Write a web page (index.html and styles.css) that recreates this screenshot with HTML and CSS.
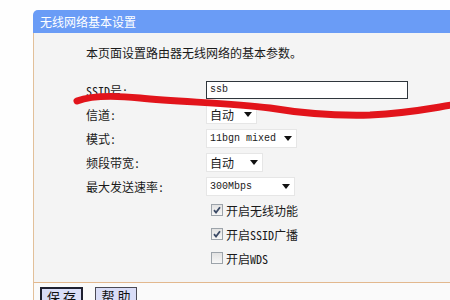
FILE: index.html
```html
<!DOCTYPE html>
<html lang="zh-CN">
<head>
<meta charset="utf-8">
<title>无线网络基本设置</title>
<link rel="stylesheet" href="styles.css">
</head>
<body>
<div class="panel">
  <div class="hd">无线网络基本设置</div>
  <div class="bd">
    <p class="intro">本页面设置路由器无线网络的基本参数。</p>
    <div class="form">
      <div class="row"><span class="lbl">SSID号:</span><span class="input">ssb</span></div>
      <div class="row"><span class="lbl">信道:</span><span class="select w50"><span class="val cjk">自动</span><i class="arr"></i></span></div>
      <div class="row"><span class="lbl">模式:</span><span class="select w90"><span class="val">11bgn mixed</span><i class="arr"></i></span></div>
      <div class="row"><span class="lbl">频段带宽:</span><span class="select w56"><span class="val cjk">自动</span><i class="arr"></i></span></div>
      <div class="row"><span class="lbl">最大发送速率:</span><span class="select w88"><span class="val">300Mbps</span><i class="arr"></i></span></div>
      <div class="row"><span class="lbl"></span><span class="chk on"><svg viewBox="0 0 10 10"><path d="M2 5.2 L4 7.6 L8 2.2"/></svg></span><span>开启无线功能</span></div>
      <div class="row"><span class="lbl"></span><span class="chk on"><svg viewBox="0 0 10 10"><path d="M2 5.2 L4 7.6 L8 2.2"/></svg></span><span>开启SSID广播</span></div>
      <div class="row"><span class="lbl"></span><span class="chk"></span><span>开启WDS</span></div>
    </div>
  </div>
  <div class="ft"><span class="btn active">保 存</span><span class="btn">帮 助</span></div>
</div>
<svg class="mark" width="450" height="300" viewBox="0 0 450 300"><path d="M77 101 C90 96 110 95 140 98 C180 102 230 103 270 108 C300 113 330 116 370 115 C410 113 432 108 452 105"/></svg>
</body>
</html>
```
FILE: styles.css
```css
html, body {
  margin: 0;
  height: 100%;
  overflow: hidden;
  background: #fefefe;
}
body {
  position: relative;
  font-family: "Noto Sans Mono CJK SC", "Noto Sans CJK SC", monospace;
  font-size: 12px;
  color: #1a1a1a;
}
.panel {
  margin: 10px 0 0 33px;
  width: 440px;
}
.hd {
  height: 23px;
  line-height: 23px;
  background: #6a9cf6;
  color: #fff;
  border-radius: 5px 0 0 0;
  padding-left: 7px;
  font-family: "Noto Sans CJK SC", sans-serif;
}
.bd {
  background: #f4f4f4;
  border-left: 1px solid #e2c09a;
  border-bottom: 1px solid #e2b88e;
  padding: 13px 0 12px 52px;
}
.intro {
  margin: 0;
  line-height: 14px;
}
.form {
  margin-top: 18px;
}
.row {
  display: flex;
  align-items: center;
  height: 24px;
  white-space: nowrap;
}
.lbl {
  width: 120px;
  flex: none;
}
.input {
  box-sizing: border-box;
  width: 202px;
  height: 18px;
  line-height: 16px;
  border: 1px solid #2f363c;
  background: #fff;
  padding-left: 3px;
  font-family: "Liberation Mono", monospace;
  font-size: 10px;
}
.select {
  box-sizing: border-box;
  height: 19px;
  display: flex;
  align-items: center;
  justify-content: space-between;
  border: 1px solid #e6e6e6;
  background: #fff;
  padding: 0 4px 0 3px;
  flex: none;
}
.select .val {
  font-family: "Liberation Mono", "Noto Sans CJK SC", monospace;
  font-size: 10px;
  white-space: nowrap;
}
.select .val.cjk {
  font-family: "Noto Sans CJK SC", sans-serif;
  font-size: 12px;
}
.w50 { width: 51px; }
.w90 { width: 91px; }
.w56 { width: 57px; }
.w88 { width: 89px; }
.arr {
  width: 0;
  height: 0;
  border-left: 4px solid transparent;
  border-right: 4px solid transparent;
  border-top: 5px solid #111;
}
.chk {
  box-sizing: border-box;
  width: 12px;
  height: 12px;
  border: 1px solid #9ca3aa;
  background: linear-gradient(#e2e2e2, #f7f7f7);
  margin: 0 3px 0 5px;
  display: flex;
  flex: none;
}
.chk svg {
  width: 10px;
  height: 10px;
  fill: none;
  stroke: #3b4a66;
  stroke-width: 1.8;
}
.ft {
  border-left: 1px solid #e2c09a;
  background: #fafafa;
  padding: 4px 0 6px 6px;
  display: flex;
  gap: 12px;
}
.btn {
  box-sizing: border-box;
  height: 18px;
  width: 42px;
  line-height: 15px;
  text-align: center;
  background: #d9ddf7;
  border: 1px solid #4a4a55;
  font-family: "Noto Sans CJK SC", sans-serif;
  font-size: 13px;
  color: #111;
}
.btn.active {
  width: 43px;
  border: 2px solid #1e2030;
}
.mark {
  position: absolute;
  left: 0;
  top: 0;
  pointer-events: none;
}
.mark path {
  fill: none;
  stroke: #e2141b;
  stroke-width: 7;
  stroke-linecap: round;
}
```
